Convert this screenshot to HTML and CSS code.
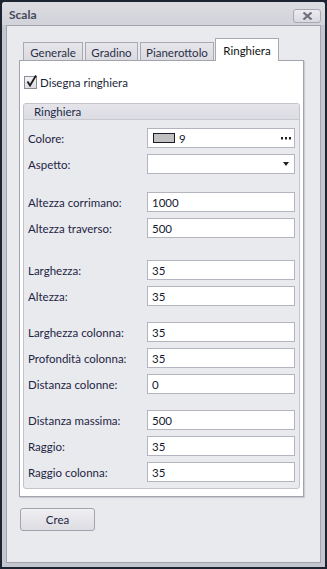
FILE: index.html
```html
<!DOCTYPE html>
<html>
<head>
<meta charset="utf-8">
<link rel="stylesheet" href="styles.css">
</head>
<body>
<div class="window">
  <div class="titlebar">
    <span class="title">Scala</span>
    <span class="close"><svg width="11" height="8" viewBox="0 0 11 8"><path d="M1.5 0.5 L9.5 7.5 M9.5 0.5 L1.5 7.5" stroke="#6f707c" stroke-width="2.2" fill="none"/></svg></span>
  </div>
  <div class="client">
    <div class="tabs">
      <div class="tab t1">Generale</div>
      <div class="tab t2">Gradino</div>
      <div class="tab t3">Pianerottolo</div>
      <div class="tab active t4">Ringhiera</div>
    </div>
    <div class="panel">
      <label class="check-row">
        <span class="checkbox"><svg width="13" height="13" viewBox="0 0 13 13"><path d="M2.5 6.5 L5 10.5 L11 0.5" stroke="#1a1a1a" stroke-width="1.8" fill="none"/></svg></span>
        <span>Disegna ringhiera</span>
      </label>
      <div class="group">
        <div class="group-head">Ringhiera</div>
        <div class="group-body">
          <div class="row"><span class="lbl">Colore:</span><div class="field color"><span class="swatch"></span><span class="val">9</span><svg class="dots" width="10" height="3" viewBox="0 0 10 3"><rect x="0" y="0" width="2" height="2.5" fill="#222"/><rect x="4" y="0" width="2" height="2.5" fill="#222"/><rect x="8" y="0" width="2" height="2.5" fill="#222"/></svg></div></div>
          <div class="row"><span class="lbl">Aspetto:</span><div class="field combo"><span class="arrow"></span></div></div>
          <div class="row sep1"><span class="lbl">Altezza corrimano:</span><div class="field">1000</div></div>
          <div class="row"><span class="lbl">Altezza traverso:</span><div class="field">500</div></div>
          <div class="row sep2"><span class="lbl">Larghezza:</span><div class="field">35</div></div>
          <div class="row"><span class="lbl">Altezza:</span><div class="field">35</div></div>
          <div class="row sep3"><span class="lbl">Larghezza colonna:</span><div class="field">35</div></div>
          <div class="row"><span class="lbl">Profondità colonna:</span><div class="field">35</div></div>
          <div class="row"><span class="lbl">Distanza colonne:</span><div class="field">0</div></div>
          <div class="row sep3"><span class="lbl">Distanza massima:</span><div class="field">500</div></div>
          <div class="row"><span class="lbl">Raggio:</span><div class="field">35</div></div>
          <div class="row"><span class="lbl">Raggio colonna:</span><div class="field">35</div></div>
        </div>
      </div>
    </div>
    <button class="btn">Crea</button>
  </div>
</div>
</body>
</html>
```

FILE: styles.css
```css
* { box-sizing: border-box; }
html, body { margin: 0; padding: 0; }
body {
  background: #1d2431;
  width: 327px;
  height: 569px;
  overflow: hidden;
  font-family: Lato, "Noto Sans", sans-serif;
  font-size: 11.5px;
  color: #1e2544;
}
.window {
  margin: 2px 0 0 2px;
  width: 323px;
  height: 565px;
  background: #c5c5cd;
  border-radius: 3px 3px 0 0;
  padding: 0 4px 4px 4px;
  display: flex;
  flex-direction: column;
}
.titlebar {
  height: 23px;
  display: flex;
  align-items: center;
  justify-content: space-between;
  background: linear-gradient(#dcdce2, #d2d2da);
  margin: 0 -4px;
  padding: 0 4px 0 7px;
  border-radius: 3px 3px 0 0;
}
.title {
  font-weight: bold;
  font-size: 12px;
  color: #464858;
  margin-top: 1px;
}
.close {
  width: 28px;
  height: 14px;
  border: 1px solid #a9a9b3;
  border-radius: 3px;
  background: linear-gradient(#ececf0, #d8d8de);
  display: flex;
  align-items: center;
  justify-content: center;
  margin-top: 4px;
}
.client {
  flex: 1;
  background: #e9eaee;
  border: 1px solid #a4a4b0;
  padding: 12px 0 0 12px;
  display: flex;
  flex-direction: column;
  align-items: flex-start;
}
.tabs {
  display: flex;
  align-items: flex-end;
  height: 22px;
  padding-left: 4px;
  position: relative;
  z-index: 1;
}
.tab {
  height: 18px;
  border: 1px solid #a9a9b5;
  border-bottom: none;
  background: linear-gradient(#e6e6ea, #dadae0);
  color: #2a2f48;
  display: flex;
  align-items: center;
  justify-content: center;
  padding-top: 1px;
  margin-right: 2px;
}
.t1 { width: 60px; }
.t2 { width: 53px; }
.t3 { width: 74px; margin-right: 1px; }
.tab.active {
  height: 23px;
  width: 64px;
  background: #fff;
  color: #111;
  margin-bottom: -1px;
  padding-top: 0;
}
.panel {
  width: 285px;
  height: 437px;
  background: #fff;
  border: 1px solid #a3a3af;
  box-shadow: 1px 1px 1px rgba(0,0,0,0.12);
  padding: 14px 3px 0 3px;
  display: flex;
  flex-direction: column;
}
.check-row {
  display: flex;
  align-items: center;
  gap: 3px;
  height: 14px;
  padding-left: 1px;
  color: #1a1f3a;
}
.checkbox {
  width: 13px;
  height: 13px;
  border: 1px solid #8c8c98;
  background: linear-gradient(#f4f4f6, #dcdce2);
  position: relative;
}
.checkbox svg { position: absolute; left: 0; top: -2px; }
.group {
  margin-top: 14px;
  width: 277px;
  height: 386px;
  background: #e9eaee;
  border: 1px solid #c3c3cc;
  border-radius: 3px;
  overflow: hidden;
}
.group-head {
  height: 16px;
  background: linear-gradient(#e4e4e9, #dcdde3);
  border-bottom: 1px solid #c8c8d0;
  padding-left: 10px;
  display: flex;
  align-items: center;
  color: #222a48;
}
.group-body {
  padding: 8px 4px 0 4px;
  display: flex;
  flex-direction: column;
  gap: 6px;
}
.row {
  display: flex;
  align-items: center;
  justify-content: space-between;
  height: 20px;
}
.sep1 { margin-top: 12px; }
.sep2 { margin-top: 16px; }
.sep3 { margin-top: 10px; }
.lbl { color: #1e2544; }
.field {
  width: 148px;
  height: 20px;
  background: #fff;
  border: 1px solid #b4b4bf;
  display: flex;
  align-items: center;
  padding-left: 4px;
  color: #141a30;
}
.color .swatch {
  width: 22px;
  height: 10px;
  background: #c0c0c0;
  border: 1px solid #1c1c28;
  margin-left: 1px;
}
.color .val { margin-left: 4px; flex: 1; }
.color .dots { margin-right: 3px; margin-top: 1px; }
.combo { justify-content: flex-end; padding-right: 5px; }
.arrow {
  width: 0; height: 0;
  border-left: 3.5px solid transparent;
  border-right: 3.5px solid transparent;
  border-top: 4px solid #222;
}
.btn {
  margin-top: 11px;
  margin-left: 1px;
  width: 75px;
  height: 23px;
  border: 1px solid #a3a3ad;
  border-radius: 3px;
  background: linear-gradient(#f0f0f3, #dcdce2);
  font-family: Lato, "Noto Sans", sans-serif;
  font-size: 11.5px;
  color: #1e2544;
  padding: 0;
}
```
